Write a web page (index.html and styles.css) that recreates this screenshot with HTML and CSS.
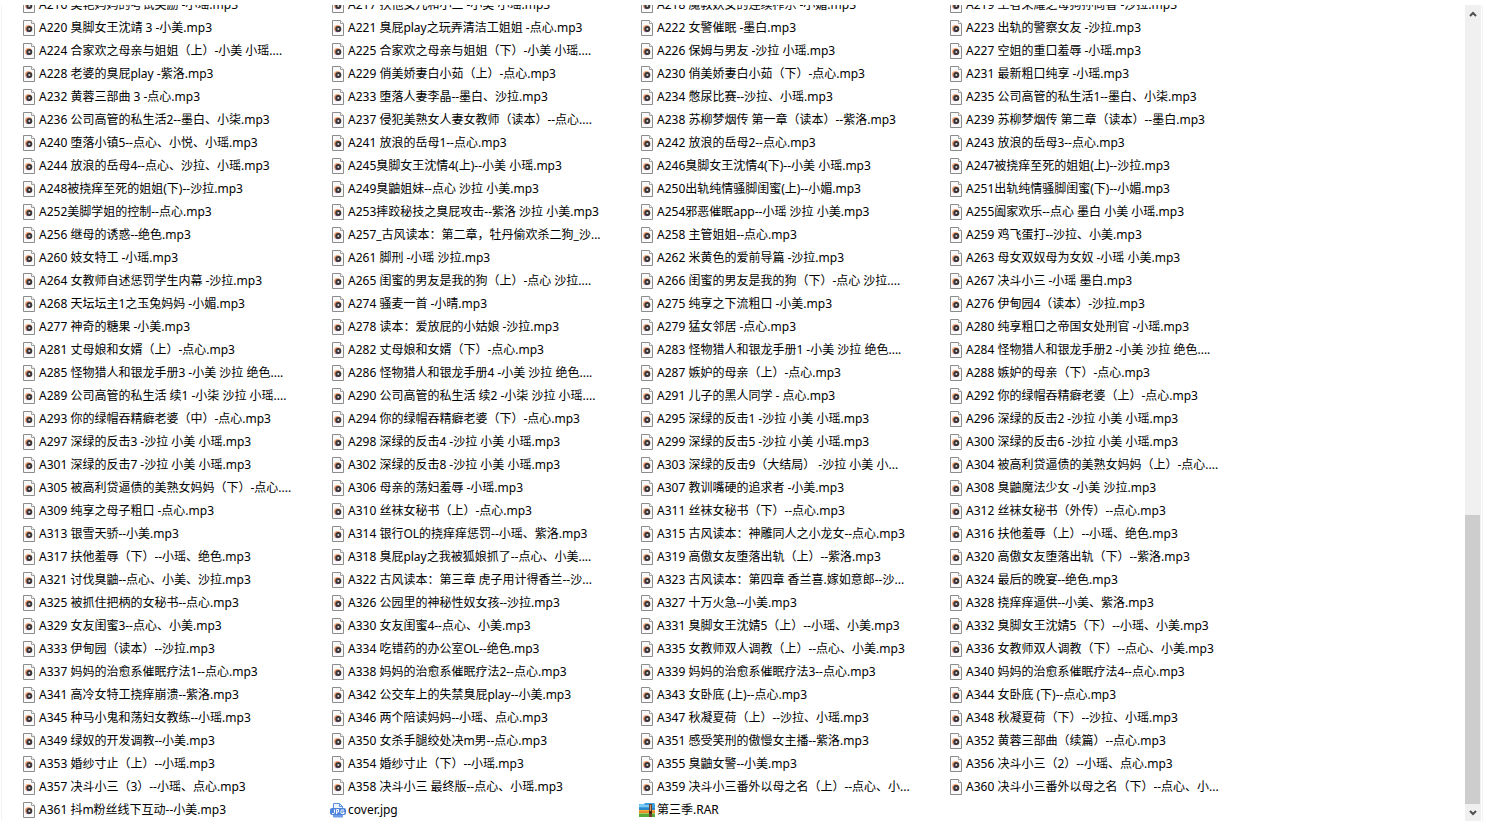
FILE: index.html
```html
<!DOCTYPE html>
<html lang="zh-CN">
<head>
<meta charset="utf-8">
<title>文件列表</title>
<link rel="stylesheet" href="styles.css">
</head>
<body>
<main class="window">
<ul class="files">
<li>A216 美艳妈妈的考试奖励 -小瑶.mp3</li>
<li>A217 扶他女儿和小三 -小美 小瑶.mp3</li>
<li>A218 魔教妖女的连续榨乐 -小媚.mp3</li>
<li>A219 王者荣耀之母狗孙尚香 -沙拉.mp3</li>
<li>A220 臭脚女王沈靖 3 -小美.mp3</li>
<li>A221 臭屁play之玩弄清洁工姐姐 -点心.mp3</li>
<li>A222 女警催眠 -墨白.mp3</li>
<li>A223 出轨的警察女友 -沙拉.mp3</li>
<li>A224 合家欢之母亲与姐姐（上）-小美 小瑶....</li>
<li>A225 合家欢之母亲与姐姐（下）-小美 小瑶....</li>
<li>A226 保姆与男友 -沙拉 小瑶.mp3</li>
<li>A227 空姐的重口羞辱 -小瑶.mp3</li>
<li>A228 老婆的臭屁play -紫洛.mp3</li>
<li>A229 俏美娇妻白小茹（上）-点心.mp3</li>
<li>A230 俏美娇妻白小茹（下）-点心.mp3</li>
<li>A231 最新粗口纯享 -小瑶.mp3</li>
<li>A232 黄蓉三部曲 3 -点心.mp3</li>
<li>A233 堕落人妻李晶--墨白、沙拉.mp3</li>
<li>A234 憋尿比赛--沙拉、小瑶.mp3</li>
<li>A235 公司高管的私生活1--墨白、小柒.mp3</li>
<li>A236 公司高管的私生活2--墨白、小柒.mp3</li>
<li>A237 侵犯美熟女人妻女教师（读本）--点心....</li>
<li>A238 苏柳梦烟传 第一章（读本）--紫洛.mp3</li>
<li>A239 苏柳梦烟传 第二章（读本）--墨白.mp3</li>
<li>A240 堕落小镇5--点心、小悦、小瑶.mp3</li>
<li>A241 放浪的岳母1--点心.mp3</li>
<li>A242 放浪的岳母2--点心.mp3</li>
<li>A243 放浪的岳母3--点心.mp3</li>
<li>A244 放浪的岳母4--点心、沙拉、小瑶.mp3</li>
<li>A245臭脚女王沈情4(上)--小美 小瑶.mp3</li>
<li>A246臭脚女王沈情4(下)--小美 小瑶.mp3</li>
<li>A247被挠痒至死的姐姐(上)--沙拉.mp3</li>
<li>A248被挠痒至死的姐姐(下)--沙拉.mp3</li>
<li>A249臭鼬姐妹--点心 沙拉 小美.mp3</li>
<li>A250出轨纯情骚脚闺蜜(上)--小媚.mp3</li>
<li>A251出轨纯情骚脚闺蜜(下)--小媚.mp3</li>
<li>A252美脚学姐的控制--点心.mp3</li>
<li>A253摔跤秘技之臭屁攻击--紫洛 沙拉 小美.mp3</li>
<li>A254邪恶催眠app--小瑶 沙拉 小美.mp3</li>
<li>A255阖家欢乐--点心 墨白 小美 小瑶.mp3</li>
<li>A256 继母的诱惑--绝色.mp3</li>
<li>A257_古风读本：第二章，牡丹偷欢杀二狗_沙...</li>
<li>A258 主管姐姐--点心.mp3</li>
<li>A259 鸡飞蛋打--沙拉、小美.mp3</li>
<li>A260 妓女特工 -小瑶.mp3</li>
<li>A261 脚刑 -小瑶 沙拉.mp3</li>
<li>A262 米黄色的爱前导篇 -沙拉.mp3</li>
<li>A263 母女双奴母为女奴 -小瑶 小美.mp3</li>
<li>A264 女教师自述惩罚学生内幕 -沙拉.mp3</li>
<li>A265 闺蜜的男友是我的狗（上）-点心 沙拉....</li>
<li>A266 闺蜜的男友是我的狗（下）-点心 沙拉....</li>
<li>A267 决斗小三 -小瑶 墨白.mp3</li>
<li>A268 天坛坛主1之玉兔妈妈 -小媚.mp3</li>
<li>A274 骚麦一首 -小晴.mp3</li>
<li>A275 纯享之下流粗口 -小美.mp3</li>
<li>A276 伊甸园4（读本）-沙拉.mp3</li>
<li>A277 神奇的糖果 -小美.mp3</li>
<li>A278 读本：爱放屁的小姑娘 -沙拉.mp3</li>
<li>A279 猛女邻居 -点心.mp3</li>
<li>A280 纯享粗口之帝国女处刑官 -小瑶.mp3</li>
<li>A281 丈母娘和女婿（上）-点心.mp3</li>
<li>A282 丈母娘和女婿（下）-点心.mp3</li>
<li>A283 怪物猎人和银龙手册1 -小美 沙拉 绝色....</li>
<li>A284 怪物猎人和银龙手册2 -小美 沙拉 绝色....</li>
<li>A285 怪物猎人和银龙手册3 -小美 沙拉 绝色....</li>
<li>A286 怪物猎人和银龙手册4 -小美 沙拉 绝色....</li>
<li>A287 嫉妒的母亲（上）-点心.mp3</li>
<li>A288 嫉妒的母亲（下）-点心.mp3</li>
<li>A289 公司高管的私生活 续1 -小柒 沙拉 小瑶....</li>
<li>A290 公司高管的私生活 续2 -小柒 沙拉 小瑶....</li>
<li>A291 儿子的黑人同学 - 点心.mp3</li>
<li>A292 你的绿帽吞精癖老婆（上）-点心.mp3</li>
<li>A293 你的绿帽吞精癖老婆（中）-点心.mp3</li>
<li>A294 你的绿帽吞精癖老婆（下）-点心.mp3</li>
<li>A295 深绿的反击1 -沙拉 小美 小瑶.mp3</li>
<li>A296 深绿的反击2 -沙拉 小美 小瑶.mp3</li>
<li>A297 深绿的反击3 -沙拉 小美 小瑶.mp3</li>
<li>A298 深绿的反击4 -沙拉 小美 小瑶.mp3</li>
<li>A299 深绿的反击5 -沙拉 小美 小瑶.mp3</li>
<li>A300 深绿的反击6 -沙拉 小美 小瑶.mp3</li>
<li>A301 深绿的反击7 -沙拉 小美 小瑶.mp3</li>
<li>A302 深绿的反击8 -沙拉 小美 小瑶.mp3</li>
<li>A303 深绿的反击9（大结局） -沙拉 小美 小...</li>
<li>A304 被高利贷逼债的美熟女妈妈（上）-点心....</li>
<li>A305 被高利贷逼债的美熟女妈妈（下）-点心....</li>
<li>A306 母亲的荡妇羞辱 -小瑶.mp3</li>
<li>A307 教训嘴硬的追求者 -小美.mp3</li>
<li>A308 臭鼬魔法少女 -小美 沙拉.mp3</li>
<li>A309 纯享之母子粗口 -点心.mp3</li>
<li>A310 丝袜女秘书（上）-点心.mp3</li>
<li>A311 丝袜女秘书（下）--点心.mp3</li>
<li>A312 丝袜女秘书（外传）--点心.mp3</li>
<li>A313 银雪天骄--小美.mp3</li>
<li>A314 银行OL的挠痒痒惩罚--小瑶、紫洛.mp3</li>
<li>A315 古风读本：神雕同人之小龙女--点心.mp3</li>
<li>A316 扶他羞辱（上）--小瑶、绝色.mp3</li>
<li>A317 扶他羞辱（下）--小瑶、绝色.mp3</li>
<li>A318 臭屁play之我被狐娘抓了--点心、小美....</li>
<li>A319 高傲女友堕落出轨（上）--紫洛.mp3</li>
<li>A320 高傲女友堕落出轨（下）--紫洛.mp3</li>
<li>A321 讨伐臭鼬--点心、小美、沙拉.mp3</li>
<li>A322 古风读本：第三章 虎子用计得香兰--沙...</li>
<li>A323 古风读本：第四章 香兰喜.嫁如意郎--沙...</li>
<li>A324 最后的晚宴--绝色.mp3</li>
<li>A325 被抓住把柄的女秘书--点心.mp3</li>
<li>A326 公园里的神秘性奴女孩--沙拉.mp3</li>
<li>A327 十万火急--小美.mp3</li>
<li>A328 挠痒痒逼供--小美、紫洛.mp3</li>
<li>A329 女友闺蜜3--点心、小美.mp3</li>
<li>A330 女友闺蜜4--点心、小美.mp3</li>
<li>A331 臭脚女王沈婧5（上）--小瑶、小美.mp3</li>
<li>A332 臭脚女王沈婧5（下）--小瑶、小美.mp3</li>
<li>A333 伊甸园（读本）--沙拉.mp3</li>
<li>A334 吃错药的办公室OL--绝色.mp3</li>
<li>A335 女教师双人调教（上）--点心、小美.mp3</li>
<li>A336 女教师双人调教（下）--点心、小美.mp3</li>
<li>A337 妈妈的治愈系催眠疗法1--点心.mp3</li>
<li>A338 妈妈的治愈系催眠疗法2--点心.mp3</li>
<li>A339 妈妈的治愈系催眠疗法3--点心.mp3</li>
<li>A340 妈妈的治愈系催眠疗法4--点心.mp3</li>
<li>A341 高冷女特工挠痒崩溃--紫洛.mp3</li>
<li>A342 公交车上的失禁臭屁play--小美.mp3</li>
<li>A343 女卧底 (上)--点心.mp3</li>
<li>A344 女卧底 (下)--点心.mp3</li>
<li>A345 种马小鬼和荡妇女教练--小瑶.mp3</li>
<li>A346 两个陪读妈妈--小瑶、点心.mp3</li>
<li>A347 秋凝夏荷（上）--沙拉、小瑶.mp3</li>
<li>A348 秋凝夏荷（下）--沙拉、小瑶.mp3</li>
<li>A349 绿奴的开发调教--小美.mp3</li>
<li>A350 女杀手腿绞处决m男--点心.mp3</li>
<li>A351 感受笑刑的傲慢女主播--紫洛.mp3</li>
<li>A352 黄蓉三部曲（续篇）--点心.mp3</li>
<li>A353 婚纱寸止（上）--小瑶.mp3</li>
<li>A354 婚纱寸止（下）--小瑶.mp3</li>
<li>A355 臭鼬女警--小美.mp3</li>
<li>A356 决斗小三（2）--小瑶、点心.mp3</li>
<li>A357 决斗小三（3）--小瑶、点心.mp3</li>
<li>A358 决斗小三 最终版--点心、小瑶.mp3</li>
<li>A359 决斗小三番外以母之名（上）--点心、小...</li>
<li>A360 决斗小三番外以母之名（下）--点心、小...</li>
<li>A361 抖m粉丝线下互动--小美.mp3</li>
<li class="has-icon"><svg class="icon" viewBox="0 0 16 16" aria-hidden="true"><path d="M3.5 7V1.5h6l3 3V7" fill="#eef4fd" stroke="#5b8fe0"/><path d="M9.500 1.500v3h3" fill="none" stroke="#5b8fe0"/><rect x="0" y="6" width="16" height="7" rx="2" fill="#4f86dc"/><path d="M3 13v1.500q0 1 1 1h8q1 0 1-1V13z" fill="#6d9de8"/><path d="M4.500 7.500v3q0 1-1 1H2M6.500 12V7.500h2v2.500h-2M14 8h-2.500q-.5 0-.5.5v2.500q0 .5.500.500H14V10h-1.500" fill="none" stroke="#fff"/></svg>cover.jpg</li>
<li class="has-icon"><svg class="icon" viewBox="0 0 16 16" aria-hidden="true"><path d="M0 2h5l1-1h9l1 1v5H0z" fill="#3b9fe0"/><path d="M1 2h4l1 1h4v2H0V3z" fill="#7ccaf4"/><path d="M0 6h16v5H0z" fill="#f0b43c"/><path d="M0 6h16v2H0z" fill="#2d87c8"/><path d="M0 9h16v2H0z" fill="#ee8a32"/><path d="M0 11h16v4H0z" fill="#58a83c"/><path d="M0 11h16v1H0z" fill="#a2cf58"/><path d="M10 2h3v13h-3z" fill="#70402a"/><path d="M11 3h1v6h-1z" fill="#c49a70"/><path d="M10 9h3v3h-3z" fill="#3f2418"/></svg>第三季.RAR</li>
</ul>
<div class="scrollbar">
<button class="arrow" type="button" aria-label="向上滚动"><svg viewBox="0 0 8 6" aria-hidden="true"><path d="M1 5l3-3 3 3"/></svg></button>
<div class="track"><div class="thumb"></div></div>
<button class="arrow" type="button" aria-label="向下滚动"><svg viewBox="0 0 8 6" aria-hidden="true"><path d="M1 1l3 3 3-3"/></svg></button>
</div>
</main>
</body>
</html>
```
FILE: styles.css
```css
* { box-sizing: border-box; }

body {
  margin: 0;
  background: #fff;
  color: #000;
  font: 12px/23px "Noto Sans", "Noto Sans CJK SC", sans-serif;
  text-spacing-trim: space-all;
}

.window {
  display: flex;
  height: 100vh;
  padding: 5px 7px 6px 1px;
}

/* The list is scrolled to its end, so its first row is partly hidden. */
.files {
  flex: 1;
  display: grid;
  grid-template-columns: repeat(auto-fill, 309px);
  grid-auto-rows: 23px;
  align-content: end;
  margin: 0;
  padding: 0 0 0 19px;
  border-left: 1px solid #f3f3f3;
  list-style: none;
  overflow: hidden;
}

.files li {
  display: flex;
  align-items: center;
  gap: 4px;
  padding-left: 2px;
  white-space: nowrap;
}

.files li::before {
  content: "";
  flex: none;
  width: 12px;
  height: 16px;
  background: url("data:image/svg+xml,%3Csvg xmlns='http://www.w3.org/2000/svg' viewBox='0 0 12 16'%3E%3Cpath d='M.5.500h8l3 3v12H.500z' fill='%23fafafa' stroke='%238c8c8c'/%3E%3Cpath d='M8.500.500v3h3' fill='%23fff' stroke='%23a0a0a0'/%3E%3Ccircle cx='5.500' cy='8.500' r='3.500' fill='%23f3a373'/%3E%3Cpath d='M3 11a3.500 3.500 0 0 0 6-3z' fill='%23a57ab5'/%3E%3Ccircle cx='6.300' cy='9' r='3' fill='%23383438'/%3E%3Ccircle cx='6.300' cy='9' r='1' fill='%23d8d8d8'/%3E%3C/svg%3E");
}

.files .has-icon {
  gap: 2px;
  padding-left: 0;
}

.files .has-icon::before { content: none; }

.icon {
  width: 16px;
  height: 16px;
}

.scrollbar {
  display: flex;
  flex-direction: column;
  width: 18px;
  padding-right: 1px;
  border-right: 1px solid #f3f3f3;
}

.arrow {
  display: grid;
  place-items: center;
  height: 17px;
  padding: 0;
  border: 0;
  background: #f0f0f0;
}

.arrow svg {
  width: 8px;
  height: 6px;
  fill: none;
  stroke: #505050;
  stroke-width: 2;
}

.track {
  flex: 1;
  display: flex;
  flex-direction: column;
  justify-content: flex-end;
  background: #f0f0f0;
}

.thumb {
  height: 37%;
  margin-right: 1px;
  background: #cdcdcd;
}
```
